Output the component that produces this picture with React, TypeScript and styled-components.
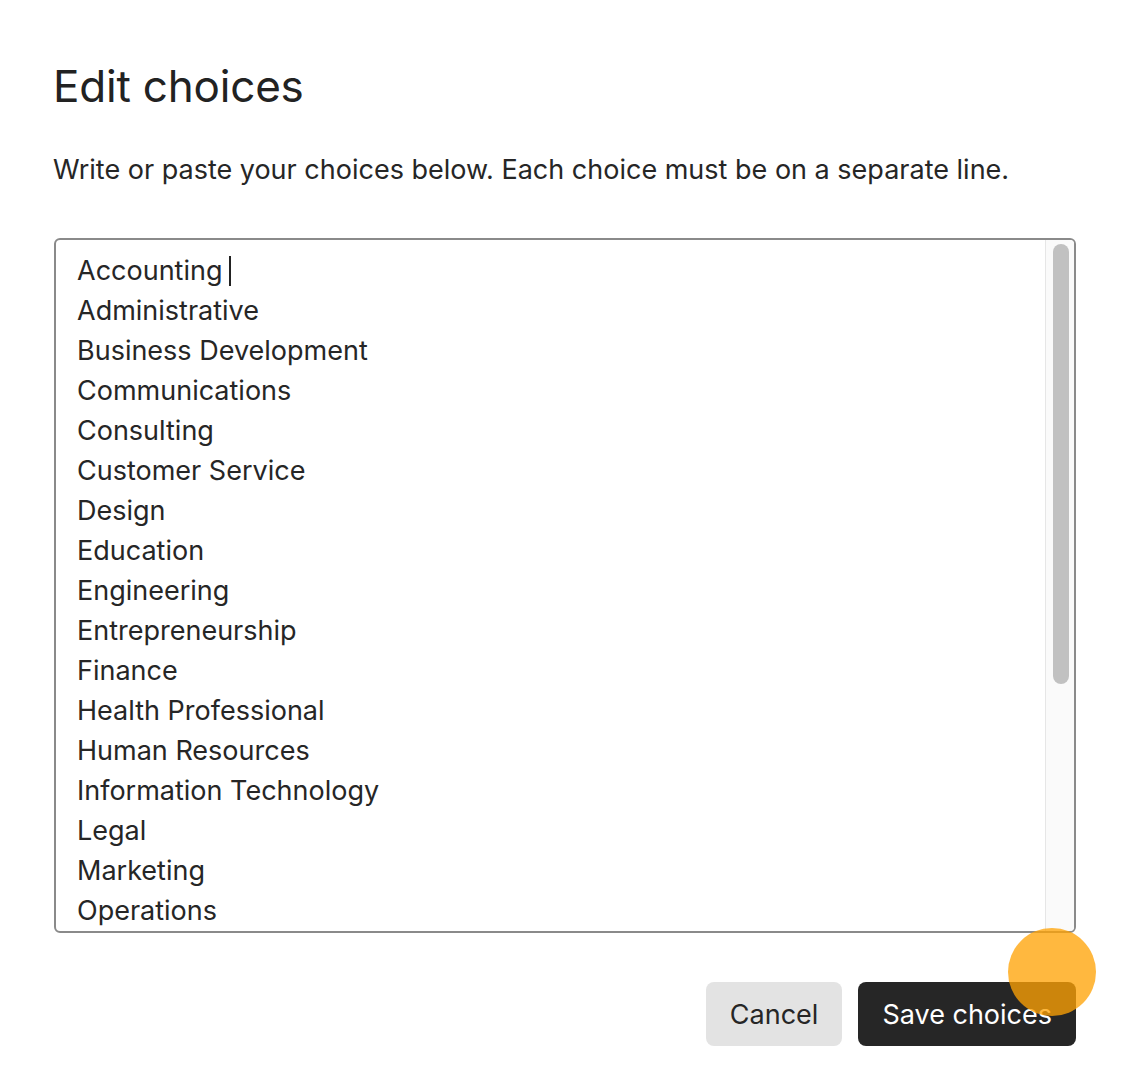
import React from "react";
import styled, { createGlobalStyle } from "styled-components";

const Global = createGlobalStyle`
  html, body { margin: 0; padding: 0; background: #ffffff; }
  body { font-family: Inter, "Noto Sans", sans-serif; color: #262626; }
`;

const Page = styled.div`
  position: relative;
  width: 1126px;
  height: 1090px;
  box-sizing: border-box;
  padding: 58px 50px 0 54px;
  display: flex;
  flex-direction: column;
`;

const Title = styled.h1`
  margin: 0 0 0 -1px;
  font-size: 44px;
  line-height: 56px;
  font-weight: 400;
  letter-spacing: -0.2px;
  color: #222;
`;

const Description = styled.p`
  margin: 39px 0 0 -1px;
  font-size: 27px;
  line-height: 34px;
  color: #262626;
`;

const Editor = styled.div`
  margin-top: 51px;
  height: 695px;
  box-sizing: border-box;
  border: 2px solid #8a8a8a;
  border-radius: 6px;
  overflow: hidden;
  display: flex;
`;

const Lines = styled.div`
  flex: 1;
  padding: 11px 0 0 21px;
  font-size: 27px;
  line-height: 40px;
  color: #262626;
`;

const Line = styled.div`
  white-space: nowrap;
`;

const Caret = styled.span`
  display: inline-block;
  width: 2px;
  height: 30px;
  margin-left: 7px;
  background: #222;
  vertical-align: -6px;
`;

const ScrollTrack = styled.div`
  width: 29px;
  box-sizing: border-box;
  background: #fafafa;
  border-left: 1px solid #e6e6e6;
  padding: 4px 5px 4px 7px;
`;

const ScrollThumb = styled.div`
  height: 440px;
  border-radius: 8px;
  background: #c1c1c1;
`;

const Actions = styled.div`
  margin-top: 49px;
  display: flex;
  justify-content: flex-end;
  gap: 16px;
`;

const Button = styled.button<{ $primary?: boolean }>`
  height: 64px;
  box-sizing: border-box;
  padding: 0 24px;
  border: none;
  border-radius: 8px;
  font-family: Inter, "Noto Sans", sans-serif;
  font-size: 27px;
  background: ${(p) => (p.$primary ? "#262626" : "#e3e3e3")};
  color: ${(p) => (p.$primary ? "#ffffff" : "#262626")};
`;

const ClickDot = styled.div`
  position: absolute;
  left: 1008px;
  top: 928px;
  width: 88px;
  height: 88px;
  border-radius: 50%;
  background: rgba(255, 163, 5, 0.77);
  pointer-events: none;
`;

const choices = [
  "Accounting",
  "Administrative",
  "Business Development",
  "Communications",
  "Consulting",
  "Customer Service",
  "Design",
  "Education",
  "Engineering",
  "Entrepreneurship",
  "Finance",
  "Health Professional",
  "Human Resources",
  "Information Technology",
  "Legal",
  "Marketing",
  "Operations",
];

export default function App() {
  return (
    <>
      <Global />
      <Page>
        <Title>Edit choices</Title>
        <Description>
          Write or paste your choices below. Each choice must be on a separate line.
        </Description>
        <Editor>
          <Lines>
            {choices.map((c, i) => (
              <Line key={c}>
                {c}
                {i === 0 && <Caret />}
              </Line>
            ))}
          </Lines>
          <ScrollTrack>
            <ScrollThumb />
          </ScrollTrack>
        </Editor>
        <Actions>
          <Button>Cancel</Button>
          <Button $primary>Save choices</Button>
        </Actions>
        <ClickDot />
      </Page>
    </>
  );
}
